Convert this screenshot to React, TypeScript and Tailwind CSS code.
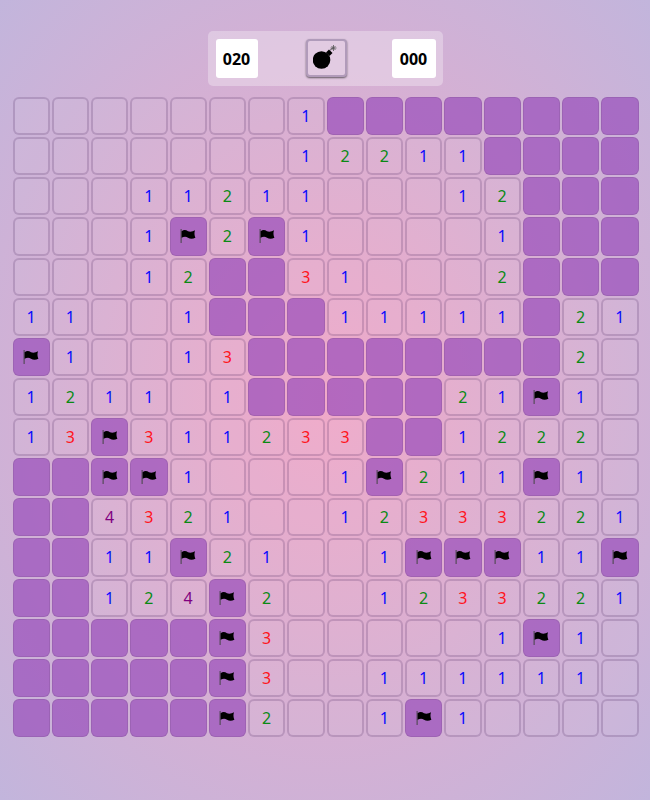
const board = [
  "eeeeeee1UUUUUUUU",
  "eeeeeee12211UUUU",
  "eee11211eee12UUU",
  "eee1F2F1eeee1UUU",
  "eee12UU31eee2UUU",
  "11ee1UUU11111U21",
  "F1ee13UUUUUUUU2e",
  "1211e1UUUUU21F1e",
  "13F31123" + "3UU12" + "22e",
  "UUFF1eee1F2" + "11F1e",
  "UU4321ee12333221",
  "UU11F21ee1FFF11F",
  "UU124F2ee1233221",
  "UUUUUF3eeeee1F1e",
  "UUUUUF3ee111111e",
  "UUUUUF2ee1F1eeee",
];

const numberColor: Record<string, string> = {
  "1": "text-[#0a0aff]",
  "2": "text-[#0a8a14]",
  "3": "text-[#ff1420]",
  "4": "text-[#800080]",
};

function Flag() {
  return (
    <svg width="16" height="14" viewBox="0 0 16 14" aria-hidden="true">
      <rect x="0.6" y="0" width="1" height="14" fill="#444" />
      <path
        d="M1.6 2.200C4 .4 6 1 8 2.200c2 1 5 .3 7-.9-.9 2.500-.6 5.200.4 7.400-3 1.700-5.400 1.300-7.400 0s-4-1.300-6.400.1Z"
        fill="#000"
      />
    </svg>
  );
}

function Bomb() {
  return (
    <svg width="26" height="26" viewBox="0 0 26 26" aria-hidden="true">
      <circle cx="8.500" cy="15" r="8.800" fill="#000" />
      <path d="m13 7.500 3-3 3.500 3.500-3 3Z" fill="#000" />
      <path d="M17 5.500c.8-1.500 1.800-2 3-2.500" fill="none" stroke="#333" strokeWidth="0.8" />
      <path
        d="M20.500 0v6M17.500 3h6M18.500 1l4 4M22.500 1l-4 4"
        stroke="#555"
        strokeWidth="0.8"
      />
    </svg>
  );
}

function Cell({ v }: { v: string }) {
  if (v === "U" || v === "F") {
    return (
      <div className="flex items-center justify-center rounded-[6px] border border-[#00000014] bg-[#964ab9ad]">
        {v === "F" ? <Flag /> : null}
      </div>
    );
  }
  return (
    <div
      className={`flex items-center justify-center rounded-[6px] border-2 border-[#3c145030] bg-[#ffffff0a] text-[16px] ${numberColor[v] ?? ""}`}
    >
      {v === "e" ? "" : v}
    </div>
  );
}

function Counter({ value, wide }: { value: string; wide?: boolean }) {
  return (
    <div
      className={`flex h-[39px] items-center justify-center rounded-[3px] bg-white text-[16px] font-bold text-black ${wide ? "w-[44px]" : "w-[42px]"}`}
    >
      {value}
    </div>
  );
}

export default function App() {
  return (
    <div className="flex min-h-[800px] flex-col items-center bg-[radial-gradient(ellipse_at_center,#f0a9c8_0%,#c2b5dc_100%)] pt-[31px] font-['Noto_Sans',sans-serif]">
      <div className="flex h-[55px] w-[235px] items-start justify-between rounded-[5px] bg-[#ffffff4d] py-2 pr-[7px] pl-2">
        <Counter value="020" />
        <button className="ml-[3px] flex h-[38px] w-[41px] items-center justify-center rounded-[4px] border-2 border-[#30205048] bg-[#ffffff10] shadow-[0_1px_2px_#00000090]">
          <Bomb />
        </button>
        <Counter value="000" wide />
      </div>
      <div className="mt-[11px] ml-[1px] grid h-[640px] w-[626px] grid-cols-[repeat(16,1fr)] grid-rows-[repeat(16,1fr)] gap-[2px]">
        {board.flatMap((row, r) =>
          row.split("").map((v, c) => <Cell key={`${r}-${c}`} v={v} />)
        )}
      </div>
    </div>
  );
}
